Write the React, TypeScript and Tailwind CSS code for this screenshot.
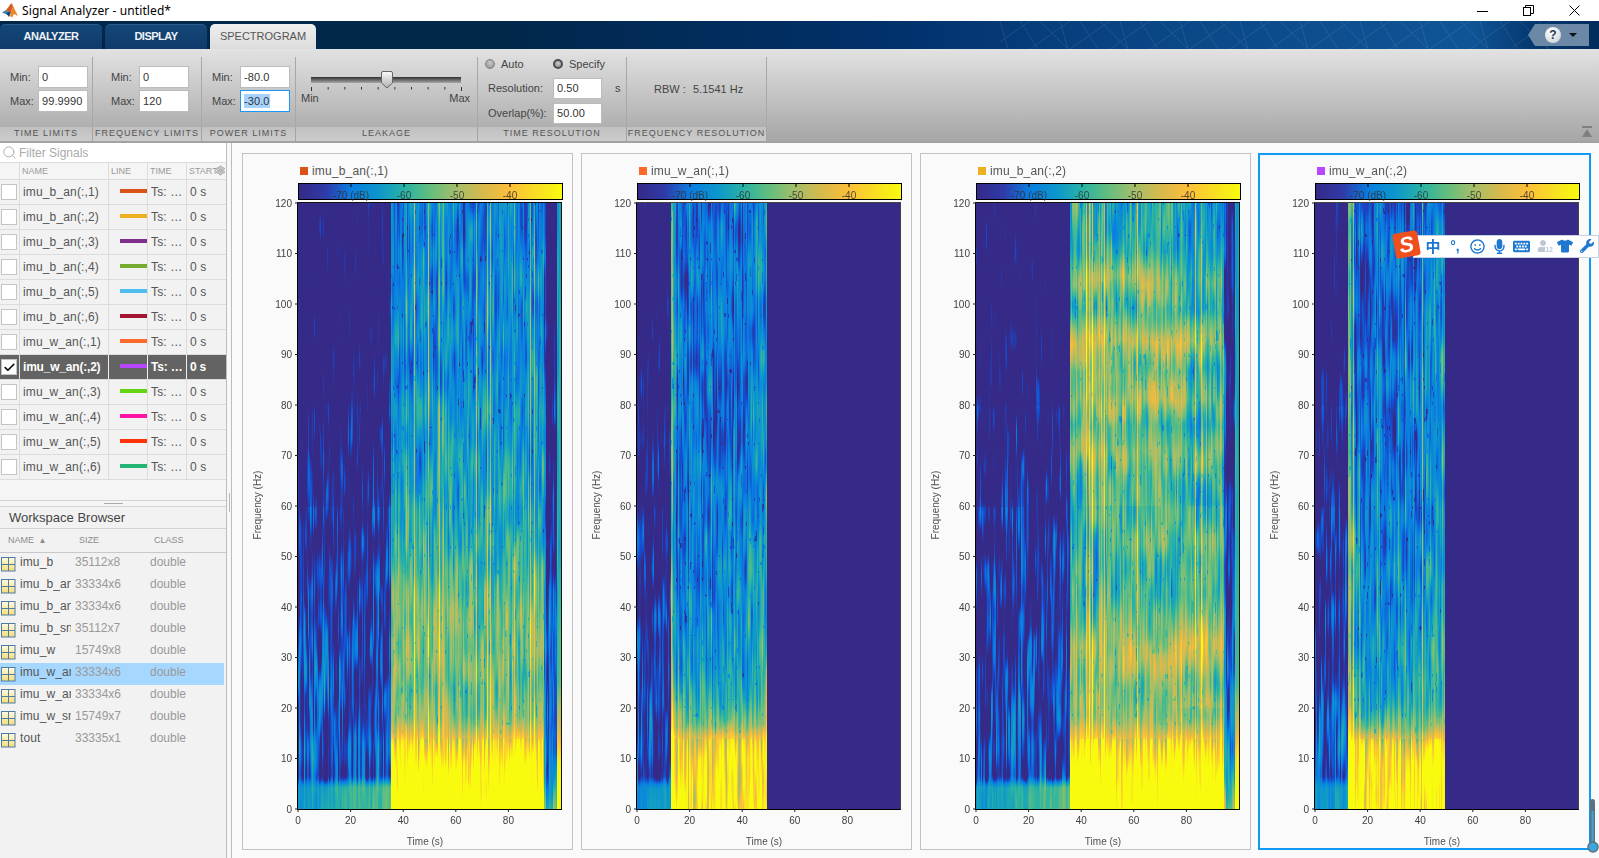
import React, { useEffect, useRef } from "react";
import { Search, Settings, Check } from "lucide-react";
import { FaRegSmile, FaMicrophone, FaKeyboard, FaTshirt, FaWrench, FaUser } from "react-icons/fa";

const PARULA: [number, number[]][] = [
  [0, [53, 42, 135]],
  [0.1, [22, 75, 205]],
  [0.2, [10, 125, 225]],
  [0.3, [12, 150, 205]],
  [0.4, [40, 178, 165]],
  [0.5, [100, 190, 125]],
  [0.6, [165, 190, 106]],
  [0.7, [215, 186, 75]],
  [0.8, [252, 190, 58]],
  [0.9, [248, 222, 35]],
  [1, [249, 251, 14]],
];
const LUT: number[][] = [];
for (let i = 0; i < 256; i++) {
  const t = i / 255;
  let k = 0;
  while (k < PARULA.length - 2 && t > PARULA[k + 1][0]) k++;
  const [a, ca] = PARULA[k];
  const [b, cb] = PARULA[k + 1];
  const u = (t - a) / (b - a);
  LUT.push([0, 1, 2].map((c) => ca[c] + (cb[c] - ca[c]) * u));
}

function hash(ix: number, iy: number, s: number) {
  let n = (Math.imul(ix, 374761393) + Math.imul(iy, 668265263) + Math.imul(s, 1013904223)) | 0;
  n = Math.imul(n ^ (n >>> 13), 1274126177);
  n ^= n >>> 16;
  n = Math.imul(n, 2246822519);
  n ^= n >>> 13;
  return (n >>> 0) / 4294967296;
}
function vn(x: number, y: number, s: number) {
  const ix = Math.floor(x);
  const iy = Math.floor(y);
  let fx = x - ix;
  let fy = y - iy;
  fx = fx * fx * (3 - 2 * fx);
  fy = fy * fy * (3 - 2 * fy);
  const a = hash(ix, iy, s);
  const b = hash(ix + 1, iy, s);
  const c = hash(ix, iy + 1, s);
  const d = hash(ix + 1, iy + 1, s);
  return a + (b - a) * fx + (c - a) * fy + (a - b - c + d) * fx * fy;
}
function prof(p: number[][], f: number) {
  for (let i = 0; i < p.length - 1; i++) {
    if (f >= p[i + 1][0]) {
      const u = (f - p[i + 1][0]) / (p[i][0] - p[i + 1][0]);
      return p[i + 1][1] + (p[i][1] - p[i + 1][1]) * u;
    }
  }
  return p[p.length - 1][1];
}

type PlotDef = {
  title: string;
  color: string;
  t0: number;
  t1: number;
  tail: boolean;
  blobs: boolean;
  seed: number;
  act: number[][];
  selected?: boolean;
};

const QUIET = [[120, -0.17], [90, -0.14], [65, -0.07], [45, 0.0], [30, 0.05], [18, 0.09], [8, 0.06], [5.5, 0.08], [0, 0.1]];
const TAIL = [[120, -0.1], [70, -0.03], [40, 0.08], [20, 0.14], [12, 0.16], [6, 0.28], [0, 0.5]];
const EDGE = [[120, 0.32], [60, 0.38], [25, 0.45], [16, 0.7], [10, 0.95], [0, 1.1]];

const plots: PlotDef[] = [
  { title: "imu_b_an(:,1)", color: "#d95319", t0: 35.3, t1: 93.2, tail: true, blobs: false, seed: 11,
    act: [[120, 0.24], [90, 0.26], [70, 0.31], [50, 0.41], [40, 0.54], [30, 0.56], [24, 0.48], [18, 0.58], [15, 0.72], [12, 0.92], [8, 1.1], [0, 1.25]] },
  { title: "imu_w_an(:,1)", color: "#ff6929", t0: 12.6, t1: 49.2, tail: false, blobs: false, seed: 23,
    act: [[120, 0.16], [70, 0.17], [45, 0.21], [30, 0.27], [22, 0.37], [17, 0.5], [14, 0.76], [10, 0.88], [0, 0.92]] },
  { title: "imu_b_an(:,2)", color: "#edb120", t0: 35.5, t1: 94, tail: true, blobs: true, seed: 37,
    act: [[120, 0.34], [110, 0.4], [105, 0.53], [99, 0.42], [93, 0.64], [87, 0.48], [81, 0.6], [76, 0.44], [71, 0.54], [66, 0.42], [60, 0.42], [42, 0.44], [33, 0.62], [25, 0.54], [18, 0.56], [15, 0.72], [12, 0.92], [8, 1.1], [0, 1.25]] },
  { title: "imu_w_an(:,2)", color: "#b746ff", t0: 12.4, t1: 49.2, tail: false, blobs: false, seed: 53, selected: true,
    act: [[120, 0.15], [70, 0.18], [40, 0.23], [28, 0.29], [20, 0.41], [16, 0.54], [13, 0.78], [9, 0.93], [0, 1.0]] },
];

function sample(p: PlotDef, x: number, y: number, peaks: number[]) {
  const t = (x / 263) * 100;
  const f = (1 - y / 606) * 120;
  if (!p.tail && t > p.t1) return 0;
  const s = p.seed;
  const fine = vn(x / 1.25, y / 48 + x * 0.03, s) - 0.5;
  const mid = vn(x / 3.6, y / 26, s + 1) - 0.5;
  const big = vn(x / 20, y / 34, s + 2) - 0.5;
  const speck = vn(x / 1.3, y / 8, s + 3);
  if (t < p.t0) {
    let q = prof(QUIET, f);
    q += f < 60 ? big * 0.2 : big * 0.08;
    q += fine * (f > 80 ? 0.42 : 0.5) + mid * 0.2;
    if (f < 7) {
      const u = Math.min(1, (7 - f) / 3);
      const w = u * u * (3 - 2 * u);
      const r = t / p.t0;
      const low = (p.tail ? 0.3 + r * 0.2 : 0.26 + r * 0.06) + fine * 0.14 + mid * 0.08;
      q = q + (low - q) * w;
    }
    return q;
  }
  if (t <= p.t1) {
    const ff = f + mid * 3;
    let v = prof(p.act, ff);
    const lowGain = f < 14 ? 2 : 1;
    v += fine * 0.3 * lowGain + mid * 0.18 + big * 0.1 + peaks[x];
    if (speck < 0.1 && f > 15) v -= 0.14;
    if (p.blobs && f > 20) {
      v += (vn(x / 45, y / 24, s + 5) - 0.5) * 0.14;
      if (f > 60) v += t > 40 && t < 70 ? 0.04 : t > 80 ? -0.05 : 0;
    }
    if (!p.tail && t > p.t1 - 7) v += 0.09;
    if (!p.tail && t < p.t0 + 1.0) v += 0.38;
    else if (!p.tail && t < p.t0 + 2.2) v += 0.16;
    return v;
  }
  if (t < 98.4) {
    return prof(TAIL, f) + fine * 0.4 + mid * 0.2 + (t < p.t1 + 1 ? 0.2 : 0);
  }
  return prof(EDGE, f) + fine * 0.15;
}

function Heat({ p }: { p: PlotDef }) {
  const ref = useRef<HTMLCanvasElement>(null);
  useEffect(() => {
    const c = ref.current;
    if (!c) return;
    const ctx = c.getContext("2d");
    if (!ctx) return;
    const W = 263;
    const H = 606;
    const img = ctx.createImageData(W, H);
    const peaks: number[] = [];
    for (let x = 0; x < W; x++) {
      const r = hash(x, 7, p.seed);
      peaks.push(r < 0.03 ? 0.32 : r < 0.08 ? 0.13 : 0);
    }
    for (let y = 0; y < H; y++) {
      for (let x = 0; x < W; x++) {
        const v = Math.max(0, Math.min(1, sample(p, x, y, peaks)));
        const col = LUT[Math.round(v * 255)];
        const i = (y * W + x) * 4;
        img.data[i] = col[0];
        img.data[i + 1] = col[1];
        img.data[i + 2] = col[2];
        img.data[i + 3] = 255;
      }
    }
    ctx.putImageData(img, 0, 0);
  }, [p]);
  return <canvas ref={ref} width={263} height={606} className="block ml-[54px] mt-[3px] w-[263px] h-[606px]" />;
}

function PlotCard({ p }: { p: PlotDef }) {
  const X = 54;
  const Y = 48;
  const yt = [0, 10, 20, 30, 40, 50, 60, 70, 80, 90, 100, 110, 120];
  const xt = [0, 20, 40, 60, 80];
  const cb = [
    [53, "-70 (dB)"],
    [106, "-60"],
    [159, "-50"],
    [212, "-40"],
  ] as [number, string][];
  return (
    <div className={p.selected ? "w-[333px] h-[697px] shrink-0 -ml-px pl-px border-2 border-[#0f9bf5]" : "w-[331px] h-[697px] shrink-0 border border-[#c2c2c2] p-px"}>
      <div className="relative h-full pt-[8px]">
        <div className="flex items-center h-[16px] pl-[54px]">
          <span className="w-[8px] h-[8px] ml-[2px] mr-[4px]" style={{ background: p.color }} />
          <span className="text-[12px] tracking-[0.17px] text-[#555]">{p.title}</span>
        </div>
        <div className="ml-[54px] mt-[4px] w-[265px] h-[17px] border border-black bg-[linear-gradient(to_right,#352a87,#2f3aa8_10%,#0a7de1_20%,#0c96cd_30%,#28b2a5_40%,#64be7d_50%,#a5be6a_60%,#d7ba4b_70%,#fcbe3a_80%,#f8de23_90%,#f9fb0e)]" />
        <Heat p={p} />
        <svg className="absolute left-0 top-0 pointer-events-none" width={329} height={693}>
          <rect x={X - 0.5} y={Y - 0.5} width={264} height={607} fill="none" stroke={p.tail ? "#111" : "#444"} />
          <path d={`M${X - 0.5} ${Y} V${Y + 606.5} H${X + 263.5}`} fill="none" stroke="#000" />
          {yt.map((f) => {
            const y = Y + 606 - (f * 606) / 120;
            return (
              <g key={f}>
                <line x1={X - 3} x2={X} y1={y} y2={y} stroke="#222" />
                <text x={X - 6} y={y + 3.5} textAnchor="end" fontSize={10} fill="#404040">{f}</text>
              </g>
            );
          })}
          {xt.map((t) => {
            const x = X + t * 2.63;
            return (
              <g key={t}>
                <line x1={x} x2={x} y1={Y + 606} y2={Y + 609} stroke="#222" />
                <text x={x} y={Y + 621} textAnchor="middle" fontSize={10} fill="#404040">{t}</text>
              </g>
            );
          })}
          {cb.map(([dx, s]) => (
            <g key={s}>
              <line x1={X + dx} x2={X + dx} y1={29} y2={32} stroke="#000" />
              <text x={X + dx} y={44} textAnchor="middle" fontSize={10} fill="#333" fillOpacity={0.85}>{s}</text>
            </g>
          ))}
          <text x={181} y={690} textAnchor="middle" fontSize={10} fill="#505050">Time (s)</text>
          <text transform="translate(17 350) rotate(-90)" textAnchor="middle" fontSize={10} fill="#505050">Frequency (Hz)</text>
        </svg>
      </div>
    </div>
  );
}

function Field({ v, w = "w-[50px]", h = "h-[22px]", sel }: { v: string; w?: string; h?: string; sel?: boolean }) {
  return (
    <div className={`${w} ${h} bg-white flex items-center pl-[3px] text-[11px] tracking-[0.1px] text-[#333] ${sel ? "border border-[#1e96f5]" : "border-[1.5px] border-[#bcbcbc]"}`}>
      {sel ? <span className="bg-[#a6d2ff] leading-[14px]">{v}</span> : v}
    </div>
  );
}

function Band({ label }: { label: string }) {
  return (
    <div className="h-[14px] flex items-center justify-center text-[9px] tracking-[1px] whitespace-nowrap text-[#555] border-r border-[#a4a4a4] bg-[linear-gradient(to_bottom,#c0c0c0,#cdcdcd)]">
      {label}
    </div>
  );
}

function MinMax({ w, pl, minV, maxV, sel, labelW }: { w: string; pl: string; minV: string; maxV: string; sel?: boolean; labelW: string }) {
  return (
    <div className={`${w} shrink-0 flex flex-col`}>
      <div className={`mt-[8px] h-[70px] ${pl} pt-[9px] flex flex-col gap-[2px] border-r border-[#a8a8a8]`}>
        <div className="flex items-center">
          <span className={`${labelW} text-[11px] text-[#444]`}>Min:</span>
          <Field v={minV} />
        </div>
        <div className="flex items-center">
          <span className={`${labelW} text-[11px] text-[#444]`}>Max:</span>
          <Field v={maxV} sel={sel} />
        </div>
      </div>
    </div>
  );
}

function Radio({ on }: { on?: boolean }) {
  return <span className={`w-[10px] h-[10px] rounded-full shrink-0 bg-[radial-gradient(circle_at_50%_35%,#c8c8c8,#8e8e8e)] ${on ? "border-2 border-[#4d4d4d]" : "border border-[#808080]"}`} />;
}

function Matlab() {
  return (
    <svg width="16" height="16" viewBox="0 0 16 16">
      <path d="M0 9.5 L4 7 L6 8.5 L3.5 11 Z" fill="#3f7fb5" />
      <path d="M4 7 L6.5 4 L8.5 1 L10 0.5 L11 4 L9 9 L6 8.5 Z" fill="#d65a1e" />
      <path d="M3.5 11 L6 8.5 L9 9 L7 14 L5 11.5 Z" fill="#17466e" />
      <path d="M10 0.5 L12.5 6 L16 13 L12 11 L10 14.5 L8 13 L9 9 L11 4 Z" fill="#e8862a" />
    </svg>
  );
}

function Ribbon() {
  return (
    <div className="h-[92px] shrink-0 flex bg-[linear-gradient(to_bottom,#e2e2e2,#a6a6a6)]">
      <div className="flex flex-col w-[767px] shrink-0 relative">
        <div className="flex h-[78px]">
          <MinMax w="w-[93px]" pl="pl-[10px]" labelW="w-[28px]" minV="0" maxV="99.9990" />
          <MinMax w="w-[109px]" pl="pl-[18px]" labelW="w-[28px]" minV="0" maxV="120" />
          <MinMax w="w-[94px]" pl="pl-[10px]" labelW="w-[28px]" minV="-80.0" maxV="-30.0" sel />
          <div className="w-[182px] shrink-0">
            <div className="mt-[8px] h-[70px] pt-[9px] border-r border-[#a8a8a8]">
              <svg width="181" height="27" className="block">
                <defs>
                  <linearGradient id="trk" x1="0" x2="0" y1="0" y2="1">
                    <stop offset="0" stopColor="#2f2f2f" />
                    <stop offset="1" stopColor="#a8a8a8" />
                  </linearGradient>
                  <linearGradient id="thm" x1="0" x2="0" y1="0" y2="1">
                    <stop offset="0" stopColor="#fafafa" />
                    <stop offset="1" stopColor="#b0b0b0" />
                  </linearGradient>
                </defs>
                <rect x="15" y="11" width="150" height="6" fill="url(#trk)" />
                {[0, 1, 2, 3, 4, 5, 6, 7, 8, 9].map((i) => {
                  const x = 15.5 + (i * 150) / 9;
                  const edge = i === 0 || i === 9;
                  return <line key={i} x1={x} x2={x} y1={21} y2={edge ? 25 : 23.5} stroke="#333" />;
                })}
                <path d="M85.5 7 Q85.5 5.5 87 5.5 H95 Q96.5 5.5 96.5 7 V17 L91 22 L85.5 17 Z" fill="url(#thm)" stroke="#666" />
              </svg>
              <div className="flex justify-between w-[169px] ml-[5px] text-[11px] text-[#444] leading-[11px]">
                <span>Min</span>
                <span>Max</span>
              </div>
            </div>
          </div>
          <div className="w-[149px] shrink-0">
            <div className="mt-[8px] h-[70px] pl-[7px] border-r border-[#a8a8a8] text-[11px] text-[#444]">
              <div className="flex items-center h-[14px]">
                <Radio />
                <span className="ml-[6px] w-[52px]">Auto</span>
                <Radio on />
                <span className="ml-[6px]">Specify</span>
              </div>
              <div className="flex items-center mt-[7px] pl-[3px]">
                <span className="w-[65px]">Resolution:</span>
                <Field v="0.50" w="w-[49px]" h="h-[21px]" />
                <span className="ml-[13px]">s</span>
              </div>
              <div className="flex items-center mt-[4px] pl-[3px]">
                <span className="w-[65px] whitespace-nowrap">Overlap(%):</span>
                <Field v="50.00" w="w-[49px]" h="h-[21px]" />
              </div>
            </div>
          </div>
          <div className="w-[140px] shrink-0">
            <div className="mt-[8px] h-[70px] pl-[27px] pt-[21px] border-r border-[#a8a8a8] text-[11px] text-[#444] flex items-start">
              <span className="w-[39px] leading-[22px]">RBW :</span>
              <span className="leading-[22px]">5.1541 Hz</span>
            </div>
          </div>
        </div>
        <div className="flex">
          <div className="w-[93px]"><Band label="TIME LIMITS" /></div>
          <div className="w-[109px]"><Band label="FREQUENCY LIMITS" /></div>
          <div className="w-[94px]"><Band label="POWER LIMITS" /></div>
          <div className="w-[182px]"><Band label="LEAKAGE" /></div>
          <div className="w-[149px]"><Band label="TIME RESOLUTION" /></div>
          <div className="w-[140px]"><Band label="FREQUENCY RESOLUTION" /></div>
        </div>
      </div>
      <div className="flex-1 flex items-end justify-end pr-[6px] pb-[3px]">
        <svg width="12" height="12" viewBox="0 0 12 12">
          <rect x="1" y="0" width="10" height="2" fill="#808080" />
          <path d="M6 3 L11 11 H1 Z" fill="#808080" />
        </svg>
      </div>
    </div>
  );
}

function TitleBar() {
  return (
    <div className="h-[21px] shrink-0 bg-white flex items-center">
      <div className="ml-[2px] mr-[4px]"><Matlab /></div>
      <span className="[font-family:'Noto_Sans',sans-serif] text-[12px] tracking-[0.1px] text-black">Signal Analyzer - untitled*</span>
      <div className="ml-auto flex items-center mr-[19px] gap-[35px]">
        <svg width="11" height="11"><line x1="0" x2="11" y1="6.5" y2="6.5" stroke="#000" /></svg>
        <svg width="11" height="11">
          <rect x="0.5" y="2.5" width="7" height="8" fill="none" stroke="#000" />
          <path d="M2.5 2.5 V0.5 H10.5 V8.5 H7.5" fill="none" stroke="#000" />
        </svg>
        <svg width="11" height="11"><path d="M0.5 0.5 L10.5 10.5 M10.5 0.5 L0.5 10.5" stroke="#000" /></svg>
      </div>
    </div>
  );
}

function Tab({ label, active, w }: { label: string; active?: boolean; w: string }) {
  return active ? (
    <div className={`${w} h-[25px] rounded-t-[5px] flex items-center justify-center text-[11px] text-[#555] bg-[linear-gradient(to_bottom,#efefef,#dcdcdc)]`}>{label}</div>
  ) : (
    <div className={`${w} h-[25px] rounded-t-[5px] flex items-center justify-center pb-[2px] text-[11px] font-bold tracking-[-0.5px] text-[#eef2f7] bg-[linear-gradient(to_bottom,#144778,#0f3a6b)] border-t border-[#2a5a8a]`}>{label}</div>
  );
}

function TabStrip() {
  return (
    <div className="h-[28px] shrink-0 relative flex items-end gap-[3px] bg-[linear-gradient(to_right,#00264a_0%,#01274a_31%,#01306a_55%,#0a4686_72%,#0f5596_92%,#04376f_96%,#002c5c_100%)] overflow-hidden">
      <Tab label="ANALYZER" w="w-[102px]" />
      <Tab label="DISPLAY" w="w-[102px]" />
      <Tab label="SPECTROGRAM" w="w-[106px]" active />
      <svg className="absolute left-[1000px] top-0" width="560" height="28" opacity="0.09">
        {Array.from({ length: 28 }).map((_, i) => (
          <line key={i} x1={i * 20} y1="0" x2={i * 20 + 8 + (i % 3) * 10} y2="28" stroke="#fff" />
        ))}
        {Array.from({ length: 14 }).map((_, i) => (
          <line key={i} x1={i * 40 + 30} y1="0" x2={i * 40 - 10} y2="28" stroke="#fff" />
        ))}
      </svg>
      <div className="ml-auto mr-[10px] mb-[3px] relative w-[61px] h-[22px] flex items-center bg-[#6b88a6] [clip-path:polygon(7px_0,100%_0,100%_100%,7px_100%,0_50%)]">
        <span className="ml-[17px] w-[16px] h-[16px] rounded-full bg-[radial-gradient(circle_at_40%_30%,#fff,#c6ced8)] flex items-center justify-center text-[12px] font-bold text-[#2b3a55] leading-none">?</span>
        <span className="ml-[8px] w-0 h-0 border-x-[4px] border-t-[4px] border-x-transparent border-t-[#111]" />
      </div>
    </div>
  );
}

const signals = [
  ["imu_b_an(:,1)", "#d95319"],
  ["imu_b_an(:,2)", "#edb120"],
  ["imu_b_an(:,3)", "#7e2f8e"],
  ["imu_b_an(:,4)", "#77ac30"],
  ["imu_b_an(:,5)", "#4dbeee"],
  ["imu_b_an(:,6)", "#a2142f"],
  ["imu_w_an(:,1)", "#ff6929"],
  ["imu_w_an(:,2)", "#b746ff"],
  ["imu_w_an(:,3)", "#64d413"],
  ["imu_w_an(:,4)", "#ff13a6"],
  ["imu_w_an(:,5)", "#fe330a"],
  ["imu_w_an(:,6)", "#22b573"],
];

const vars = [
  ["imu_b", "35112x8"],
  ["imu_b_an", "33334x6"],
  ["imu_b_an", "33334x6"],
  ["imu_b_sn", "35112x7"],
  ["imu_w", "15749x8"],
  ["imu_w_an", "33334x6"],
  ["imu_w_an", "33334x6"],
  ["imu_w_sn", "15749x7"],
  ["tout", "33335x1"],
];

function SignalRow({ name, color, sel }: { name: string; color: string; sel?: boolean }) {
  const line = sel ? "border-[#f0f0f0]" : "border-[#dcdcdc]";
  const text = sel ? "text-white font-bold tracking-[-0.2px]" : "text-[#555] tracking-[0.15px]";
  return (
    <div className={`flex h-[25px] border-b border-[#dcdcdc] text-[12px] ${sel ? "bg-[#636363]" : ""}`}>
      <div className={`w-[20px] shrink-0 border-r border-[#dcdcdc] flex items-center pl-px`}>
        <span className="w-[16px] h-[16px] bg-white border border-[#c4c4c4] flex items-center justify-center">
          {sel && <Check size={13} strokeWidth={3} color="#000" />}
        </span>
      </div>
      <div className={`w-[89px] shrink-0 border-r ${line} pl-[3px] leading-[25px] whitespace-nowrap overflow-hidden ${text}`}>{name}</div>
      <div className={`w-[39px] shrink-0 border-r ${line} pl-[11px] pt-[9px]`}>
        <div className="w-[27px] h-[4px]" style={{ background: color }} />
      </div>
      <div className={`w-[39px] shrink-0 border-r ${line} pl-[3px] leading-[25px] whitespace-nowrap overflow-hidden ${text}`}>Ts: …</div>
      <div className={`flex-1 pl-[3px] leading-[25px] whitespace-nowrap ${text}`}>0 s</div>
    </div>
  );
}

function VarIcon() {
  return (
    <svg width="16" height="16" className="shrink-0 mb-px">
      <defs>
        <linearGradient id="vg" x1="0" x2="0" y1="0" y2="1">
          <stop offset="0" stopColor="#fffbe0" />
          <stop offset="1" stopColor="#f5dc78" />
        </linearGradient>
      </defs>
      <rect x="1.5" y="1.5" width="13.5" height="13.5" fill="url(#vg)" stroke="#4f7ba5" />
      <line x1="8.5" x2="8.5" y1="1" y2="15" stroke="#4f7ba5" />
      <line x1="1" x2="15" y1="8.5" y2="8.5" stroke="#4f7ba5" />
    </svg>
  );
}

function LeftPanel() {
  return (
    <div className="w-[227px] shrink-0 flex flex-col border-r border-[#bdbdbd] bg-[#f2f2f2]">
      <div className="h-[20px] shrink-0 bg-white border-b border-[#dcdcdc] flex items-center pl-[2px]">
        <Search size={15} color="#aaa" strokeWidth={1.5} />
        <span className="ml-[2px] text-[12px] text-[#aaa]">Filter Signals</span>
      </div>
      <div className="relative h-[17px] shrink-0 flex border-b border-[#dcdcdc] text-[9px] text-[#9a9a9a] leading-[17px] bg-[#f5f5f5]">
        <div className="w-[20px] border-r border-[#dcdcdc]" />
        <div className="w-[89px] border-r border-[#dcdcdc] pl-[2px]">NAME</div>
        <div className="w-[39px] border-r border-[#dcdcdc] pl-[2px]">LINE</div>
        <div className="w-[39px] border-r border-[#dcdcdc] pl-[2px]">TIME</div>
        <div className="flex-1 pl-[2px]">START</div>
        <Settings size={11} color="#a8a8a8" className="absolute right-0 top-[2px]" fill="#c8c8c8" />
      </div>
      {signals.map(([n, c], i) => (
        <SignalRow key={n} name={n} color={c} sel={i === 7} />
      ))}
      <div className="h-[20px] shrink-0 bg-[#f5f5f5]" />
      <div className="h-[7px] shrink-0 border-y border-[#d4d4d4] flex items-center justify-center bg-[#f5f5f5]">
        <span className="w-[19px] h-px bg-[#aaa]" />
      </div>
      <div className="h-[22px] shrink-0 pl-[9px] flex items-center text-[13px] text-[#444] border-b border-[#d4d4d4]">Workspace Browser</div>
      <div className="h-[24px] shrink-0 flex items-center text-[9px] text-[#8c8c8c] border-b border-[#c8c8c8]">
        <span className="ml-[8px] w-[71px]">NAME <span className="text-[8px] ml-[2px]">▲</span></span>
        <span className="w-[75px]">SIZE</span>
        <span>CLASS</span>
      </div>
      {vars.map(([n, s], i) => (
        <div key={i} className={`flex items-center h-[22px] w-[224px] text-[12px] ${i === 5 ? "bg-[#a6d8ff]" : ""}`}>
          <VarIcon />
          <span className="ml-[4px] mb-[4px] w-[51px] overflow-hidden whitespace-nowrap tracking-[0.1px] text-[#555] shrink-0">{n}</span>
          <span className="ml-[4px] mb-[4px] w-[75px] text-[#999] shrink-0">{s}</span>
          <span className="mb-[4px] text-[#999]">double</span>
        </div>
      ))}
    </div>
  );
}

function Sogou() {
  const cls = "w-[22px] flex items-center justify-center shrink-0";
  return (
    <div className="absolute left-[1392px] top-[231px] h-[27px] w-[207px] flex items-center">
      <div className="absolute left-[21px] top-[4px] right-0 h-[23px] bg-white border border-[#c6d2df]" />
      <div className="absolute left-[2px] top-[1px] w-[25px] h-[25px] rounded-[3px] bg-[#ef4f1d] rotate-[-10deg] flex items-center justify-center text-white font-black italic text-[22px] leading-none">S</div>
      <div className="relative ml-[30px] mt-[3px] flex items-center text-[#1e78d0]">
        <span className={`${cls} text-[15px] font-bold [font-family:'Noto_Sans_CJK_SC',sans-serif]`}>中</span>
        <span className={`${cls} text-[14px] font-bold leading-none`}>°,</span>
        <span className={cls}><FaRegSmile size={15} /></span>
        <span className={cls}><FaMicrophone size={15} /></span>
        <span className={cls}><FaKeyboard size={17} /></span>
        <span className={`${cls} relative text-[#bcc8d4]`}>
          <FaUser size={12} />
          <span className="absolute right-[1px] bottom-[-2px] bg-white text-[7px] leading-[8px] font-bold">12</span>
        </span>
        <span className={cls}><FaTshirt size={16} /></span>
        <span className={cls}><FaWrench size={14} /></span>
      </div>
    </div>
  );
}

export default function App() {
  return (
    <div className="relative w-[1599px] h-[858px] overflow-hidden flex flex-col bg-[#fafafa] [font-family:'Liberation_Sans',Arial,sans-serif]">
      <TitleBar />
      <TabStrip />
      <Ribbon />
      <div className="flex-1 flex min-h-0 border-t-2 border-[#a2a2a2]">
        <LeftPanel />
        <div className="w-[5px] shrink-0 border-r border-[#bdbdbd] bg-[#f8f8f8] flex justify-center">
          <span className="mt-[350px] w-px h-[19px] bg-[#b8b8b8]" />
        </div>
        <div className="flex-1 pl-[10px] pt-[10px] flex gap-[8px] items-start">
          {plots.map((p) => (
            <PlotCard key={p.title} p={p} />
          ))}
        </div>
      </div>
      <Sogou />
      <svg className="absolute left-[1585px] top-[797px]" width="14" height="58">
        <rect x="5" y="2" width="5" height="46" rx="2.5" fill="#5f707e" />
        <rect x="6.5" y="14" width="2" height="34" fill="#3ba7dc" />
        <circle cx="8" cy="50" r="5" fill="#3ba7dc" stroke="#5f707e" strokeWidth="1.5" />
      </svg>
    </div>
  );
}
